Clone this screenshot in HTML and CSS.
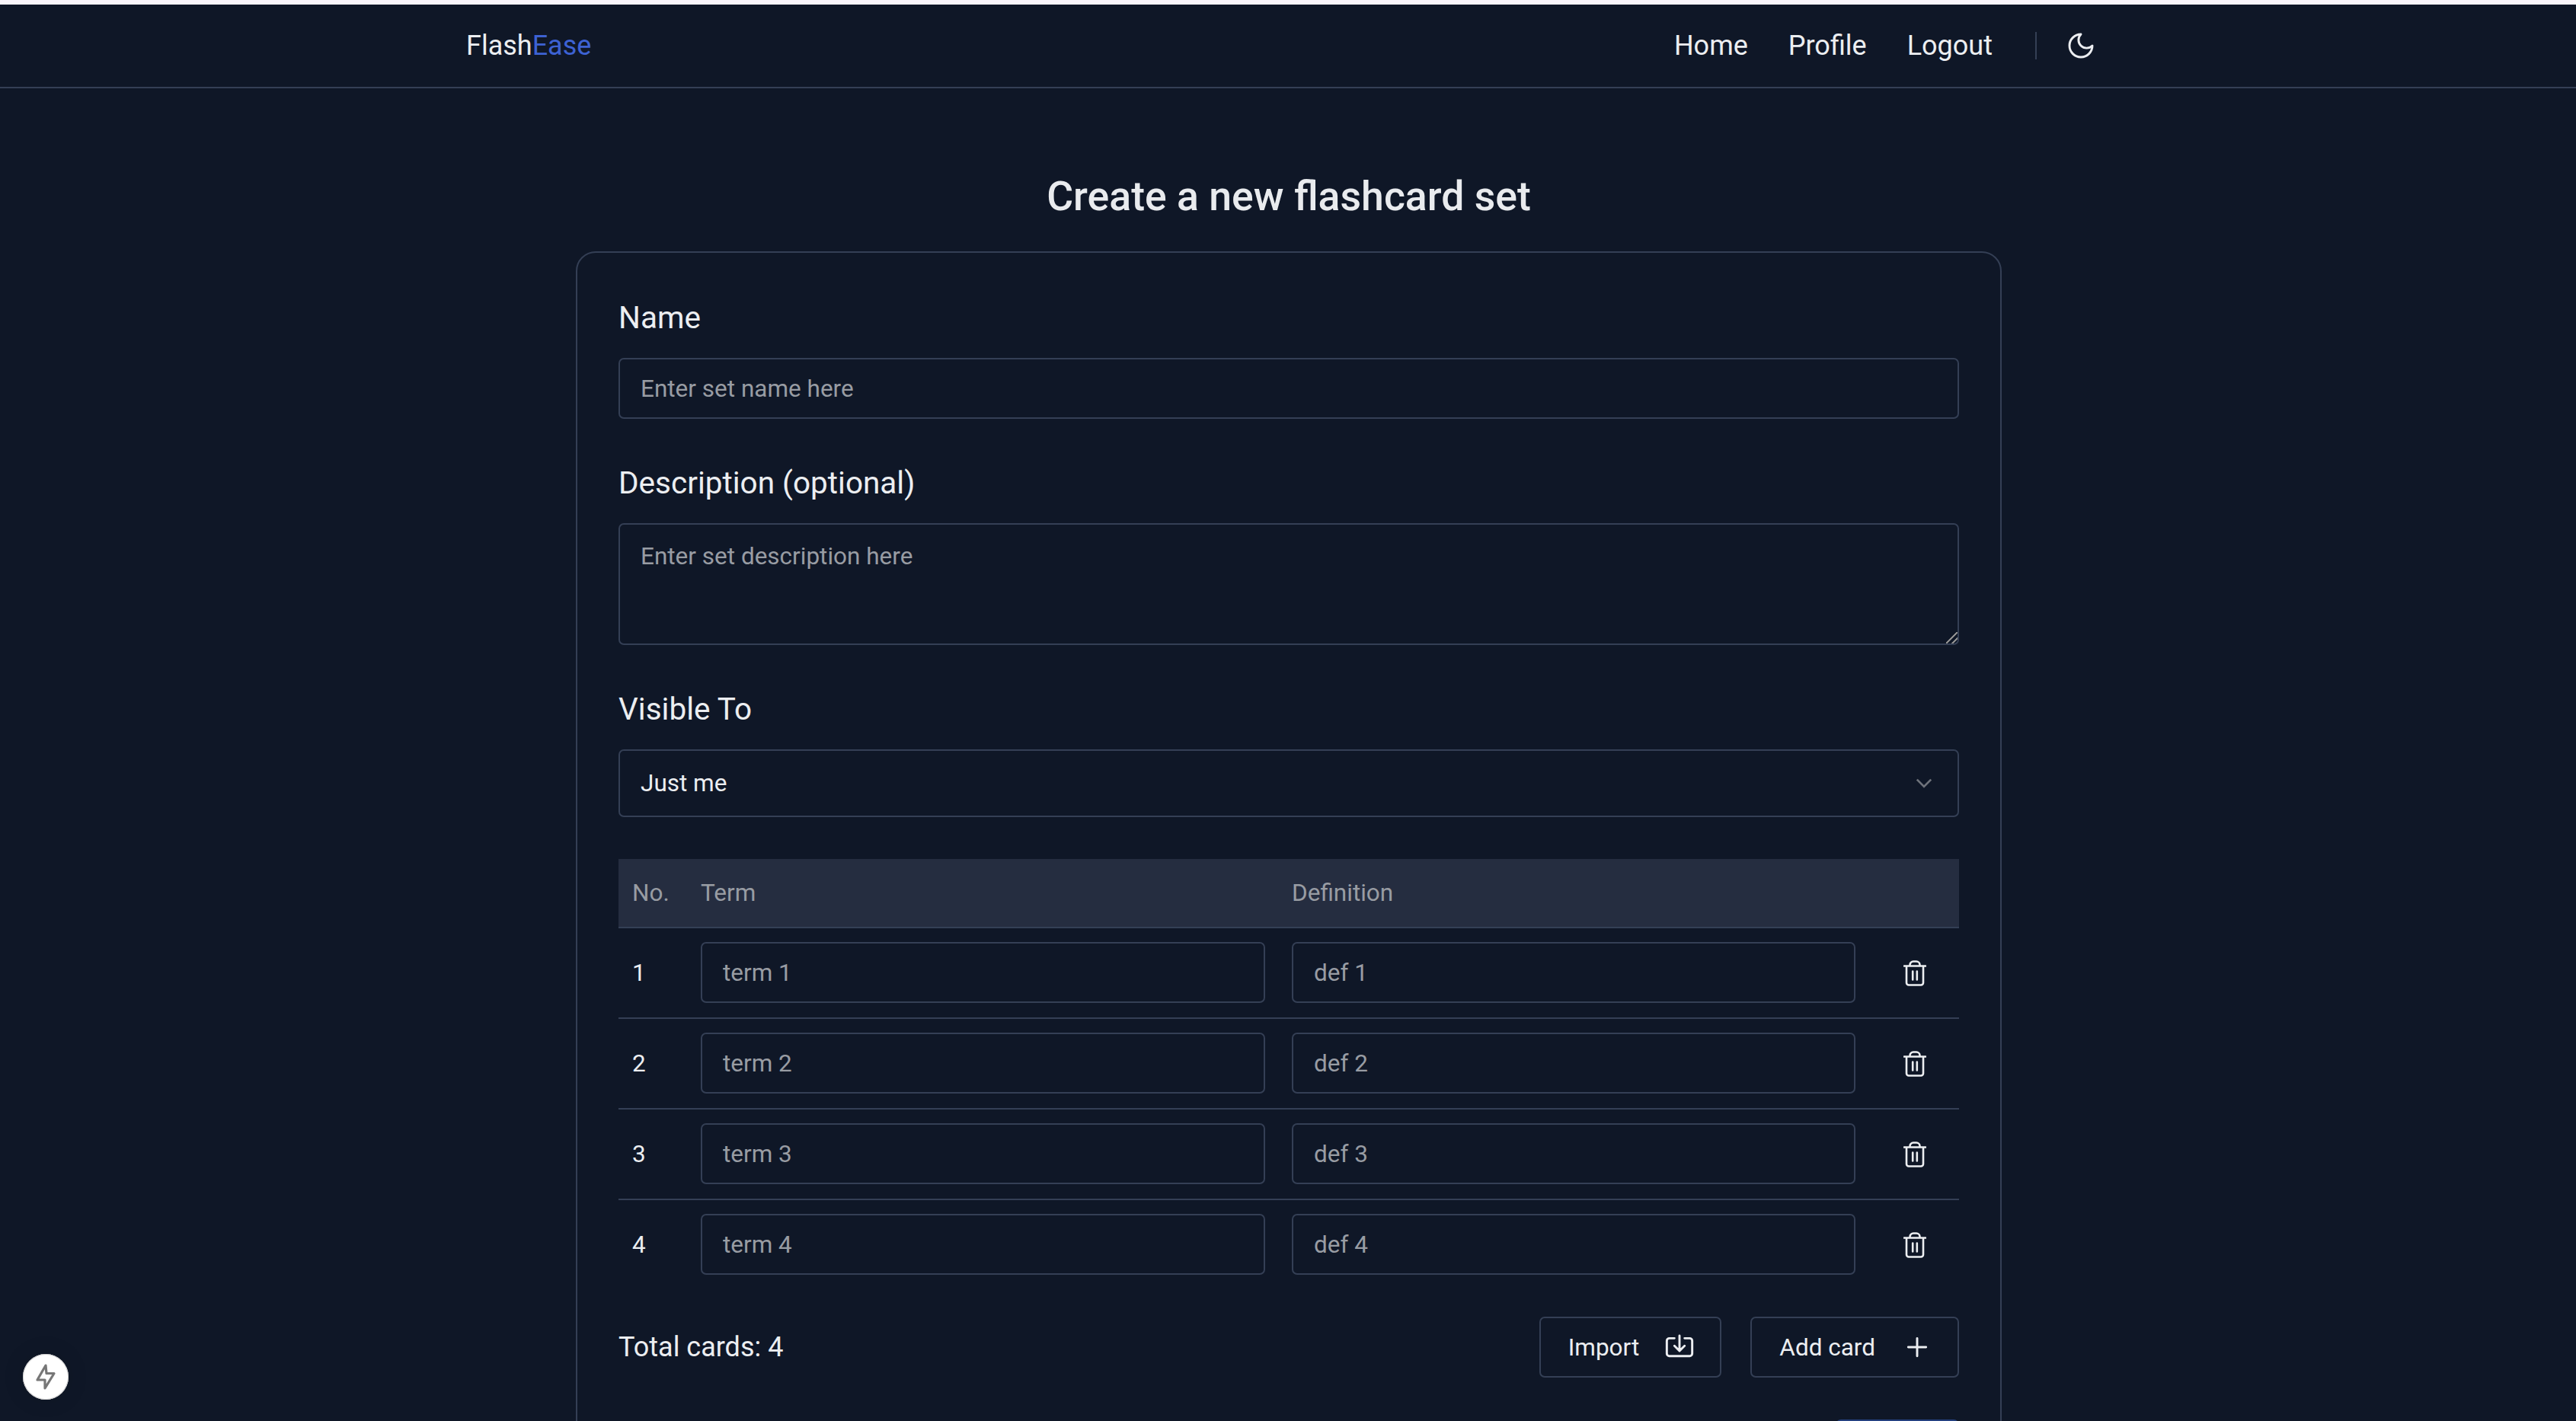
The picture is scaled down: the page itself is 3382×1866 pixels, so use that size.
FILE: index.html
```html
<!DOCTYPE html>
<html lang="en">
<head>
    <meta charset="UTF-8">
    <meta name="viewport" content="width=device-width, initial-scale=1.0">
    <title>FlashEase</title>
    <link rel="stylesheet" href="styles.css">
</head>
<body>
    <header class="navbar">
        <div class="navbar-inner">
            <a class="logo" href="#">Flash<span class="logo-accent">Ease</span></a>
            <nav class="nav-links">
                <a href="#">Home</a>
                <a href="#">Profile</a>
                <a href="#">Logout</a>
                <span class="nav-divider"></span>
                <button class="theme-toggle" type="button" aria-label="Toggle theme">
                    <svg class="icon-moon" viewBox="0 0 24 24"><path d="M12 3a6 6 0 0 0 9 9 9 9 0 1 1-9-9Z"/></svg>
                </button>
            </nav>
        </div>
    </header>

    <main class="page">
        <h1>Create a new flashcard set</h1>
        <form class="card">
            <label class="field-label" for="set-name">Name</label>
            <input class="text-input" id="set-name" type="text" placeholder="Enter set name here">

            <label class="field-label" for="set-desc">Description (optional)</label>
            <textarea class="text-input text-area" id="set-desc" placeholder="Enter set description here"></textarea>

            <label class="field-label">Visible To</label>
            <button class="select-box" type="button">
                <span>Just me</span>
                <svg class="icon-chevron" viewBox="0 0 20 12"><path d="M1.5 1.5 10 10l8.500-8.500"/></svg>
            </button>

            <table class="cards-table">
                <thead>
                    <tr>
                        <th class="col-no">No.</th>
                        <th class="col-term">Term</th>
                        <th class="col-def">Definition</th>
                        <th class="col-del"></th>
                    </tr>
                </thead>
                <tbody>
                    <tr>
                        <td>1</td>
                        <td class="col-term"><input class="text-input" type="text" placeholder="term 1"></td>
                        <td><input class="text-input" type="text" placeholder="def 1"></td>
                        <td class="col-del"><svg class="icon-trash" viewBox="0 0 30 34"><path d="M1 7.500h28M4 7.500v22a3 3 0 0 0 3 3h16a3 3 0 0 0 3-3v-22M8.500 7.500V6A4.500 4.500 0 0 1 13 1.500h4A4.500 4.500 0 0 1 21.500 6v1.500M12.200 14.500v11M17.800 14.500v11"/></svg></td>
                    </tr>
                    <tr>
                        <td>2</td>
                        <td class="col-term"><input class="text-input" type="text" placeholder="term 2"></td>
                        <td><input class="text-input" type="text" placeholder="def 2"></td>
                        <td class="col-del"><svg class="icon-trash" viewBox="0 0 30 34"><path d="M1 7.500h28M4 7.500v22a3 3 0 0 0 3 3h16a3 3 0 0 0 3-3v-22M8.500 7.500V6A4.500 4.500 0 0 1 13 1.500h4A4.500 4.500 0 0 1 21.500 6v1.500M12.200 14.500v11M17.800 14.500v11"/></svg></td>
                    </tr>
                    <tr>
                        <td>3</td>
                        <td class="col-term"><input class="text-input" type="text" placeholder="term 3"></td>
                        <td><input class="text-input" type="text" placeholder="def 3"></td>
                        <td class="col-del"><svg class="icon-trash" viewBox="0 0 30 34"><path d="M1 7.500h28M4 7.500v22a3 3 0 0 0 3 3h16a3 3 0 0 0 3-3v-22M8.500 7.500V6A4.500 4.500 0 0 1 13 1.500h4A4.500 4.500 0 0 1 21.500 6v1.500M12.200 14.500v11M17.800 14.500v11"/></svg></td>
                    </tr>
                    <tr>
                        <td>4</td>
                        <td class="col-term"><input class="text-input" type="text" placeholder="term 4"></td>
                        <td><input class="text-input" type="text" placeholder="def 4"></td>
                        <td class="col-del"><svg class="icon-trash" viewBox="0 0 30 34"><path d="M1 7.500h28M4 7.500v22a3 3 0 0 0 3 3h16a3 3 0 0 0 3-3v-22M8.500 7.500V6A4.500 4.500 0 0 1 13 1.500h4A4.500 4.500 0 0 1 21.500 6v1.500M12.200 14.500v11M17.800 14.500v11"/></svg></td>
                    </tr>
                </tbody>
            </table>

            <div class="table-footer">
                <span class="total">Total cards: 4</span>
                <div class="table-actions">
                    <button class="btn-outline btn-import" type="button">
                        Import
                        <svg class="icon-btn" viewBox="0 0 24 24"><path d="M12 3v12M8 11l4 4 4-4M8 5H4a2 2 0 0 0-2 2v10a2 2 0 0 0 2 2h16a2 2 0 0 0 2-2V7a2 2 0 0 0-2-2h-4"/></svg>
                    </button>
                    <button class="btn-outline" type="button">
                        Add card
                        <svg class="icon-btn" viewBox="0 0 24 24"><path d="M5 12h14M12 5v14"/></svg>
                    </button>
                </div>
            </div>

            <div class="form-submit">
                <button class="btn-primary" type="submit" aria-label="Create"></button>
            </div>
        </form>
    </main>

    <div class="dev-badge">
        <svg viewBox="0 0 60 60"><path d="M30 15 19 34h10v11l12-19.500H31L30 15Z"/></svg>
    </div>
</body>
</html>
```

FILE: styles.css
```css
* {
    box-sizing: border-box;
}

html, body {
    height: 1866px;
    overflow: hidden;
}

body {
    margin: 0;
    border-top: 6px solid #faf5fb;
    background-color: #0f1727;
    color: #eceef1;
    font-family: Roboto, "Liberation Sans", sans-serif;
    font-size: 31.5px;
}

a {
    color: inherit;
    text-decoration: none;
}

/* navbar */
.navbar {
    height: 110px;
    border-bottom: 2px solid #343f55;
}

.navbar-inner {
    width: 2158px;
    height: 100%;
    margin: 0 auto;
    display: flex;
    align-items: center;
    justify-content: space-between;
}

.logo {
    font-size: 36px;
}

.logo-accent {
    color: #3d62d3;
}

.nav-links {
    display: flex;
    align-items: center;
    font-size: 36px;
    gap: 53px;
}

.nav-divider {
    width: 2px;
    height: 36px;
    margin-left: 3px;
    background-color: #343f55;
}

.theme-toggle {
    display: flex;
    width: 58px;
    padding: 0;
    margin: 0 0 0 -15px;
    background: none;
    border: none;
    color: inherit;
}

.icon-moon {
    width: 40px;
    height: 40px;
    fill: none;
    stroke: currentColor;
    stroke-width: 1.75;
    stroke-linecap: round;
    stroke-linejoin: round;
}

/* form card */
.page {
    display: flex;
    flex-direction: column;
    align-items: center;
    padding-left: 2px;
}

h1 {
    margin: 111px 0 0;
    height: 103px;
    font-size: 53.6px;
    font-weight: 500;
    line-height: 61px;
    color: #e9ebee;
}

.card {
    width: 1872px;
    padding: 62px 54px;
    border: 2px solid #343f55;
    border-radius: 26px;
}

.field-label {
    display: block;
    font-size: 40.5px;
    line-height: 46px;
    margin-bottom: 30px;
}

.text-input {
    display: block;
    width: 100%;
    height: 80px;
    padding: 0 27px;
    border: 2px solid #343f55;
    border-radius: 7px;
    background-color: transparent;
    color: #eceef1;
    font-family: inherit;
    font-size: 31.5px;
    outline: none;
    margin-bottom: 61px;
}

.text-input::placeholder {
    color: #989ca3;
}

.text-area {
    height: 160px;
    padding-top: 23px;
}

.text-area::-webkit-resizer {
    background: linear-gradient(135deg, transparent 0 46%, #8f8f8f 46% 55%, transparent 55% 72%, #8f8f8f 72% 81%, transparent 81%);
}

.select-box {
    display: flex;
    align-items: center;
    justify-content: space-between;
    width: 100%;
    height: 89px;
    padding: 0 33px 0 27px;
    border: 2px solid #343f55;
    border-radius: 7px;
    background: none;
    color: #eceef1;
    font-family: inherit;
    font-size: 31.5px;
}

.icon-chevron {
    width: 22px;
    height: 13px;
    fill: none;
    stroke: #6f737b;
    stroke-width: 2.5;
}

/* cards table */
.cards-table {
    width: 100%;
    margin-top: 55px;
    border-collapse: separate;
    border-spacing: 0;
    table-layout: fixed;
}

.cards-table th {
    height: 91px;
    padding: 0;
    background-color: #252d40;
    border-bottom: 2px solid #343f55;
    color: #989ca3;
    font-weight: 400;
    text-align: left;
}

.cards-table td {
    padding: 18px 0 19px;
    border-bottom: 2px solid #343f55;
}

.cards-table tr:last-child td {
    border-bottom: none;
}

.cards-table .text-input {
    margin: 0;
}

.cards-table th:first-child, .cards-table td:first-child {
    padding-left: 18px;
}

.col-no {
    width: 108px;
}

.col-term {
    width: 776px;
}

.cards-table td.col-term {
    padding-right: 35px;
}

.col-def {
    width: 740px;
}

.icon-trash {
    display: block;
    width: 30px;
    height: 34px;
    margin: 1px 0 0 63px;
    fill: none;
    stroke: #eceef1;
    stroke-width: 2.6;
    stroke-linecap: round;
    stroke-linejoin: round;
}

/* footer of the table */
.table-footer {
    display: flex;
    align-items: center;
    justify-content: space-between;
    margin-top: 36px;
}

.total {
    font-size: 36px;
}

.table-actions {
    display: flex;
    gap: 38px;
}

.btn-outline {
    display: flex;
    align-items: center;
    gap: 35px;
    height: 80px;
    padding: 0 33px 0 36px;
    background: none;
    border: 2px solid #343f55;
    border-radius: 7px;
    color: #eceef1;
    font-family: inherit;
    font-size: 31.5px;
}

.btn-import {
    gap: 33px;
}

.icon-btn {
    width: 40px;
    height: 40px;
    fill: none;
    stroke: currentColor;
    stroke-width: 1.75;
    stroke-linecap: round;
    stroke-linejoin: round;
}

.form-submit {
    display: flex;
    justify-content: flex-end;
    margin-top: 55px;
}

.btn-primary {
    width: 162px;
    height: 80px;
    border: none;
    border-radius: 7px;
    background-color: #24407f;
}

/* dev indicator, sits over the page */
.dev-badge {
    position: fixed;
    left: 30px;
    top: 1778px;
    width: 60px;
    height: 60px;
    border-radius: 50%;
    background-color: #fff;
    box-shadow: inset 0 0 0 1px #d0d0d0, 0 0 30px rgba(0, 0, 0, 0.1);
}

.dev-badge svg {
    display: block;
    width: 60px;
    height: 60px;
    fill: none;
    stroke: #777;
    stroke-width: 3.2;
    stroke-linejoin: round;
}
```
